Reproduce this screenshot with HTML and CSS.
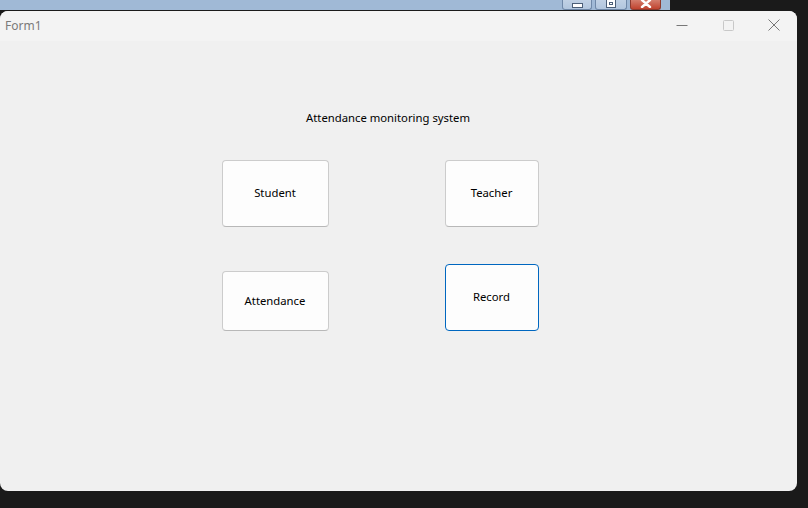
FILE: index.html
```html
<!DOCTYPE html>
<html>
<head>
<meta charset="utf-8">
<link rel="stylesheet" href="styles.css">
</head>
<body>
<div class="screen">
  <div class="top">
    <div class="strip">
      <div class="classic min"><span class="bar"></span></div>
      <div class="classic max"><span class="box"></span></div>
      <div class="classic close"><svg width="14" height="9" viewBox="0 0 14 9"><path d="M3 1l8 7M11 1l-8 7" stroke="#fff" stroke-width="2.4" stroke-linecap="round"/></svg></div>
    </div>
  </div>
  <div class="window">
    <div class="titlebar">
      <span class="title">Form1</span>
      <div class="caps">
        <svg class="cap" width="46" height="30" viewBox="0 0 46 30"><path d="M17.5 14.5h11" stroke="#777" stroke-width="1"/></svg>
        <svg class="cap" width="46" height="30" viewBox="0 0 46 30"><rect x="18.5" y="9.5" width="10" height="10" rx="1" fill="none" stroke="#c8c8c8" stroke-width="1"/></svg>
        <svg class="cap" width="46" height="30" viewBox="0 0 46 30"><path d="M17.5 8.5l11 11M28.5 8.5l-11 11" stroke="#777" stroke-width="1"/></svg>
      </div>
    </div>
    <div class="client">
      <div class="heading">Attendance monitoring system</div>
      <div class="grid">
        <button class="btn wide tall">Student</button>
        <button class="btn narrow tall">Teacher</button>
        <button class="btn wide short">Attendance</button>
        <button class="btn narrow tall focus">Record</button>
      </div>
    </div>
  </div>
</div>
</body>
</html>
```
FILE: styles.css
```css
html, body {
  margin: 0;
  padding: 0;
  background: #1a1a1a;
}
.screen {
  width: 808px;
  height: 508px;
  overflow: hidden;
  font-family: "Noto Sans", "Open Sans", sans-serif;
}
.top {
  height: 11px;
  display: flex;
}
.strip {
  width: 670px;
  height: 10px;
  background: #a0b9d6;
  display: flex;
  justify-content: flex-end;
  align-items: flex-start;
  padding-right: 9px;
  box-sizing: border-box;
  gap: 3px;
}
.classic {
  height: 12px;
  box-sizing: border-box;
  border: 1px solid #6f88a8;
  border-top: none;
  border-radius: 0 0 3px 3px;
  background: linear-gradient(#c3d3e6, #b2c6de);
  display: flex;
  justify-content: center;
  align-items: flex-end;
  overflow: hidden;
  margin-top: -2px;
}
.min { width: 30px; }
.max { width: 32px; }
.close {
  width: 31px;
  background: linear-gradient(#d88a7a, #c0432f);
  border-color: #8d3a2d;
}
.close svg { display: block; margin-bottom: 1px; }
.bar {
  width: 9px;
  height: 3px;
  background: #fff;
  border: 1px solid #4c5f78;
  margin-bottom: 1px;
}
.box {
  width: 8px;
  height: 7px;
  border: 1px solid #4c5f78;
  background: #fff;
  box-shadow: inset 0 0 0 2px #fff, inset 0 0 0 3px #4c5f78;
  margin-bottom: 1px;
}
.window {
  width: 797px;
  height: 480px;
  border-radius: 8px;
  overflow: hidden;
  background: #f0f0f0;
  display: flex;
  flex-direction: column;
}
.titlebar {
  height: 30px;
  flex: none;
  background: #f3f3f3;
  display: flex;
  align-items: center;
  justify-content: space-between;
}
.title {
  padding-left: 5px;
  font-size: 12px;
  color: #7a7a7a;
  line-height: 30px;
}
.caps {
  display: flex;
  margin-right: 0;
}
.cap { display: block; }
.client {
  flex: 1;
  display: flex;
  flex-direction: column;
  align-items: flex-start;
}
.heading {
  margin: 69px 0 0 306px;
  font-size: 11.3px;
  line-height: 16px;
  color: #000;
  white-space: nowrap;
}
.grid {
  margin: 34px 0 0 222px;
  display: grid;
  grid-template-columns: 107px 94px;
  column-gap: 116px;
  row-gap: 37px;
  align-items: end;
}
.btn {
  box-sizing: border-box;
  background: #fdfdfd;
  border: 1px solid #cccccc;
  border-bottom-color: #b8b8b8;
  border-radius: 4px;
  font-family: "Noto Sans", "Open Sans", sans-serif;
  font-size: 11.3px;
  color: #000;
  padding: 0 1px 2px 0;
  margin: 0;
}
.wide { width: 107px; }
.narrow { width: 94px; }
.tall { height: 67px; }
.short { height: 60px; }
.focus {
  border: 1px solid #0067c0;
}
```
